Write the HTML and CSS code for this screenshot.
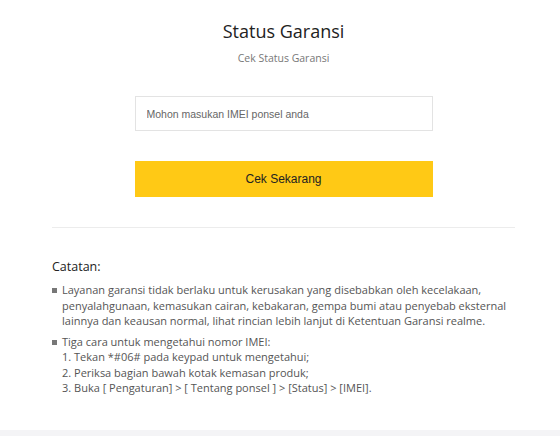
FILE: index.html
```html
<!DOCTYPE html>
<html>
<head>
    <title>Status Garansi</title>
    <link rel="stylesheet" href="styles.css">
</head>
<body>
    <div class="page">
        <div class="check">
            <h1 class="title">Status Garansi</h1>
            <p class="subtitle">Cek Status Garansi</p>

            <form class="check-form" id="checkForm">
                <input type="text" class="imei-input" id="imei" placeholder="Mohon masukan IMEI ponsel anda">
                <button type="button" class="check-btn" id="checkBtn">Cek Sekarang</button>
            </form>
        </div>

        <div class="notes">
            <h2 class="notes-title">Catatan:</h2>
            <ul class="notes-list">
                <li>Layanan garansi tidak berlaku untuk kerusakan yang disebabkan oleh kecelakaan, penyalahgunaan, kemasukan cairan, kebakaran, gempa bumi atau penyebab eksternal lainnya dan keausan normal, lihat rincian lebih lanjut di Ketentuan Garansi realme.</li>
                <li>Tiga cara untuk mengetahui nomor IMEI:<br>
                    1. Tekan *#06# pada keypad untuk mengetahui;<br>
                    2. Periksa bagian bawah kotak kemasan produk;<br>
                    3. Buka [ Pengaturan] &gt; [ Tentang ponsel ] &gt; [Status] &gt; [IMEI].</li>
            </ul>
        </div>
    </div>
    <div class="footer-strip"></div>
</body>
</html>
```

FILE: styles.css
```css
html, body {
    margin: 0;
    padding: 0;
    background-color: #fff;
    font-family: "Open Sans", "Liberation Sans", sans-serif;
}

.page {
    height: 430px;
    padding: 0 45px 0 52px;
    box-sizing: border-box;
}

.check {
    display: flex;
    flex-direction: column;
    align-items: center;
    padding-top: 19px;
    padding-bottom: 30px;
    border-bottom: 1px solid #ececec;
}

.title {
    margin: 0;
    font-size: 18px;
    font-weight: 400;
    line-height: 24px;
    color: #222;
}

.subtitle {
    margin: 7px 0 0;
    font-size: 10.5px;
    line-height: 16px;
    color: #777;
}

.check-form {
    display: flex;
    flex-direction: column;
    gap: 30px;
    width: 298px;
    margin-top: 30px;
}

.imei-input {
    height: 35px;
    padding: 0 11px;
    border: 1px solid #e3e3e3;
    font-family: "Liberation Sans", Arial, sans-serif;
    font-size: 10.5px;
    color: #333;
    box-sizing: border-box;
    outline: none;
}

.imei-input::placeholder {
    color: #666;
}

.check-btn {
    height: 36px;
    border: none;
    background-color: #ffc915;
    font-family: "Liberation Sans", Arial, sans-serif;
    font-size: 12px;
    color: #222;
    cursor: pointer;
}

.notes {
    padding-top: 30px;
}

.notes-title {
    margin: 0 0 6px;
    font-size: 12.5px;
    font-weight: 400;
    line-height: 18px;
    color: #222;
}

.notes-list {
    margin: 0;
    padding: 0;
    list-style: none;
}

.notes-list li {
    position: relative;
    padding-left: 10px;
    margin-bottom: 5px;
    font-size: 11px;
    line-height: 15.5px;
    color: #555;
}

.notes-list li::before {
    content: "";
    position: absolute;
    left: 0;
    top: 6px;
    width: 5px;
    height: 5px;
    background-color: #777;
}

.footer-strip {
    height: 6px;
    background-color: #f4f4f6;
}
```
